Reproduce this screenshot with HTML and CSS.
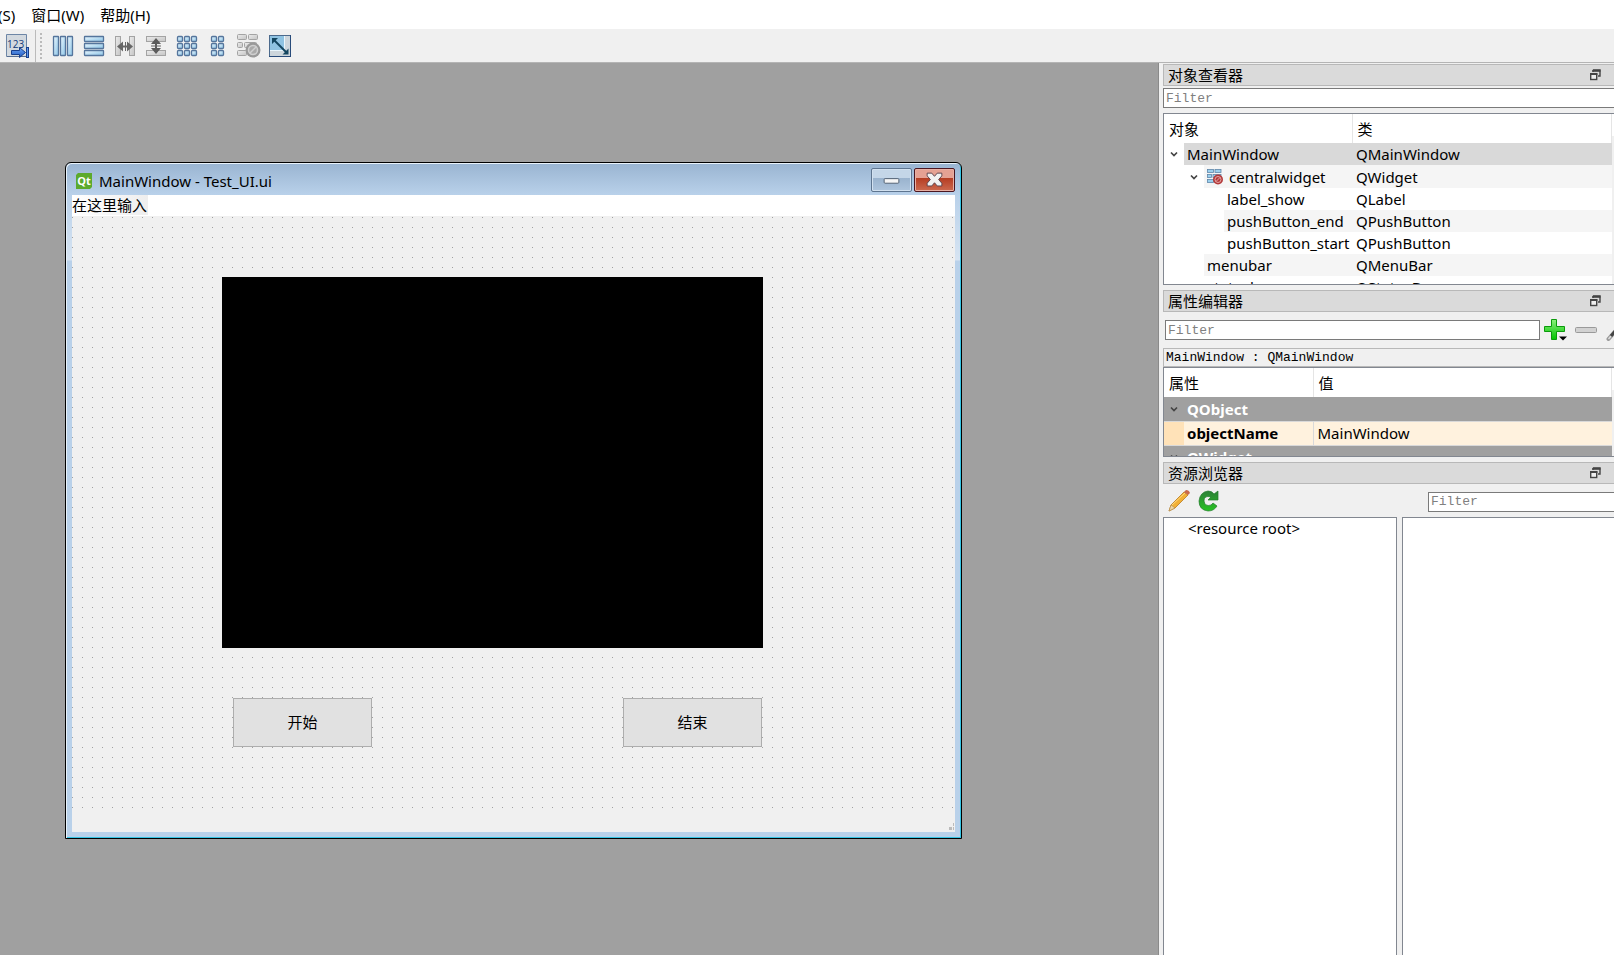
FILE: index.html
```
<!DOCTYPE html>
<html lang="zh-CN">
<head>
<meta charset="utf-8">
<title>Qt Designer</title>
<link rel="stylesheet" href="styles.css">
</head>
<body>
<svg class="defs" width="0" height="0" aria-hidden="true">
  <defs>
    <linearGradient id="blue" x1="0" y1="0" x2="1" y2="1"><stop offset="0" stop-color="#eaf7fe"/><stop offset="1" stop-color="#8cc4e6"/></linearGradient>
    <linearGradient id="grey" x1="0" y1="0" x2="1" y2="1"><stop offset="0" stop-color="#ececec"/><stop offset="1" stop-color="#c4c4c4"/></linearGradient>
    <linearGradient id="green" x1="0" y1="0" x2="0" y2="1"><stop offset="0" stop-color="#8cf07c"/><stop offset="1" stop-color="#00c400"/></linearGradient>
    <linearGradient id="leaf" x1="0" y1="0" x2="0" y2="1"><stop offset="0" stop-color="#2d8038"/><stop offset="1" stop-color="#27c322"/></linearGradient>
    <linearGradient id="arrow" x1="0" y1="0" x2="0" y2="1"><stop offset="0" stop-color="#6fa7f5"/><stop offset="1" stop-color="#1f58c0"/></linearGradient>
    <symbol id="float" viewBox="0 0 12 12"><path d="M4 1h7v6H9M4 1v2" fill="none" stroke="#444" stroke-width="1.4"/><path d="M3.500 1.800h8" stroke="#444" stroke-width="2"/><rect x="1.700" y="5" width="6" height="5.500" fill="#eee" stroke="#444" stroke-width="1.400"/><path d="M1 5h7.400" stroke="#444" stroke-width="2"/></symbol>
    <symbol id="chevron" viewBox="0 0 8 8"><path d="M1 2.500 4 5.500 7 2.500" fill="none" stroke="#444" stroke-width="1.700"/></symbol>
  </defs>
</svg>

<nav class="menubar" aria-label="菜单">
  <button class="menu">(S)</button>
  <button class="menu">窗口(W)</button>
  <button class="menu">帮助(H)</button>
</nav>

<div class="toolbar" role="toolbar">
  <button class="tool tab-order" aria-label="编辑 Tab 顺序"><svg viewBox="0 0 24 24"><path d="M.500 .500h20v22H.500z" fill="#d3d9df" stroke="#6d86a6"/><path d="M1 22.500h20" stroke="#586f92"/><text x="1" y="14" class="digits">123</text><path d="M5.500 16.500h8v-3l6 5-6 5v-3h-8z" fill="url(#arrow)" stroke="#173f8c"/><path d="M21.500 13v11" stroke="#173f8c" stroke-width="3"/><path d="M21.500 14v9" stroke="#5b96ef"/></svg></button>
  <span class="split"></span>
  <span class="grip"></span>
  <button class="tool" aria-label="水平布局"><svg viewBox="0 0 24 24"><g fill="url(#blue)" stroke="#55759c" stroke-width="1.300"><rect x="2.500" y="2.500" width="5" height="19" rx=".5"/><rect x="9.500" y="2.500" width="5" height="19" rx=".5"/><rect x="16.500" y="2.500" width="5" height="19" rx=".5"/></g></svg></button>
  <button class="tool" aria-label="垂直布局"><svg viewBox="0 0 24 24"><g fill="url(#blue)" stroke="#55759c" stroke-width="1.300"><rect x="2.500" y="2.500" width="19" height="5" rx=".5"/><rect x="2.500" y="9.500" width="19" height="5" rx=".5"/><rect x="2.500" y="16.500" width="19" height="5" rx=".5"/></g></svg></button>
  <button class="tool" aria-label="水平分裂器"><svg viewBox="0 0 24 24"><g fill="url(#grey)" stroke="#a3a3a3"><rect x="2.500" y="2.500" width="5" height="19"/><rect x="16.500" y="2.500" width="5" height="19"/></g><path d="M4 12.500l6-5v4h4v-4l6 5-6 5v-4h-4v4z" fill="#666"/><path d="M12.500 8v9" stroke="#666"/></svg></button>
  <button class="tool" aria-label="垂直分裂器"><svg viewBox="0 0 24 24"><g fill="url(#grey)" stroke="#a3a3a3"><rect x="2.500" y="2.500" width="19" height="5"/><rect x="2.500" y="16.500" width="19" height="5"/></g><path d="M12 4l5 6h-4v4h4l-5 6-5-6h4v-4H7z" fill="#5c5c5c"/><path d="M7 12h10" stroke="#666"/></svg></button>
  <button class="tool" aria-label="栅格布局"><svg viewBox="0 0 24 24"><g fill="url(#blue)" stroke="#55759c" stroke-width="1.300"><rect x="2.500" y="2.500" width="5" height="5" rx="1"/><rect x="9.500" y="2.500" width="5" height="5" rx="1"/><rect x="16.500" y="2.500" width="5" height="5" rx="1"/><rect x="2.500" y="9.500" width="5" height="5" rx="1"/><rect x="9.500" y="9.500" width="5" height="5" rx="1"/><rect x="16.500" y="9.500" width="5" height="5" rx="1"/><rect x="2.500" y="16.500" width="5" height="5" rx="1"/><rect x="9.500" y="16.500" width="5" height="5" rx="1"/><rect x="16.500" y="16.500" width="5" height="5" rx="1"/></g></svg></button>
  <button class="tool" aria-label="表单布局"><svg viewBox="0 0 24 24"><g fill="url(#blue)" stroke="#55759c" stroke-width="1.300"><rect x="5.500" y="2.500" width="5" height="5" rx="1"/><rect x="12.500" y="2.500" width="5" height="5" rx="1"/><rect x="5.500" y="9.500" width="5" height="5" rx="1"/><rect x="12.500" y="9.500" width="5" height="5" rx="1"/><rect x="5.500" y="16.500" width="5" height="5" rx="1"/><rect x="12.500" y="16.500" width="5" height="5" rx="1"/></g></svg></button>
  <button class="tool" aria-label="打破布局"><svg viewBox="0 0 24 24"><g fill="url(#grey)" stroke="#a3a3a3"><rect x=".5" y=".5" width="9" height="5" rx="1"/><rect x="11.500" y=".5" width="9" height="5" rx="1"/><rect x=".5" y="8.500" width="5" height="5" rx="1"/><rect x="7.500" y="8.500" width="12" height="5" rx="1"/><rect x=".5" y="16.500" width="9" height="5" rx="1"/></g><circle cx="16" cy="16" r="7.500" fill="#999"/><circle cx="16" cy="16" r="4.500" fill="#aaa" stroke="#d0d0d0" stroke-width="1.500"/><path d="M13 19l6-6" stroke="#d0d0d0" stroke-width="1.500"/></svg></button>
  <button class="tool" aria-label="调整大小"><svg viewBox="0 0 24 24"><rect x="1.500" y="1.500" width="21" height="21" fill="#cdd6dc" stroke="#4c6a8c"/><rect x="2" y="2" width="14" height="14" fill="#8fc3e2"/><path d="M16.500 2v14.500H2" fill="none" stroke="#eaf6fc"/><path d="M6 6l13 13" stroke="#144660" stroke-width="2"/><path d="M4 4h6l-6 6zM20.500 20.500h-6l6-6z" fill="#144660"/><path d="M1 22.500h22M22.500 1v22" stroke="#284b7a"/></svg></button>
</div>

<div class="body">
  <main class="workspace">
    <section class="window">
      <header class="titlebar">
        <svg class="logo" viewBox="0 0 16 16"><path d="M2 0h14v14l-2 2H0V2z" fill="#5caa2c"/><text x="8" y="12" text-anchor="middle" class="logo-text">Qt</text></svg>
        <h1 class="caption">MainWindow - Test_UI.ui</h1>
        <button class="sys minimize" aria-label="最小化"><svg viewBox="0 0 41 24"><rect x="12.500" y="10.500" width="16" height="5" rx="1" fill="#f6f6f6" stroke="#4c5a6b"/></svg></button>
        <button class="sys close" aria-label="关闭"><svg viewBox="0 0 41 24"><path d="M12.500 4.500h5l3 3.500 3-3.500h5v3L25 11.500l3.500 4v3h-5l-3-3.500-3 3.500h-5v-3l3.500-4-3.500-4z" fill="#f2f2f2" stroke="#54404a"/></svg></button>
      </header>
      <div class="client">
        <div class="form-menu"><button class="type-here">在这里输入</button></div>
        <div class="form">
          <div class="label-show"></div>
          <button class="push start">开始</button>
          <button class="push end">结束</button>
        </div>
        <div class="statusbar"><svg class="size-grip" viewBox="0 0 5 7"><path d="M4 0h1v3H4zM4 4h1v3H4zM0 4h3v3H0z" fill="#bbb"/></svg></div>
      </div>
    </section>
  </main>

  <aside class="docks">
    <section class="dock">
      <header class="dock-title"><h2>对象查看器</h2><button class="float" aria-label="浮动"><svg><use href="#float"/></svg></button></header>
      <input class="filter" type="text" placeholder="Filter" aria-label="对象过滤">
      <div class="view objects">
        <table>
          <colgroup><col class="c-object"><col></colgroup>
          <thead><tr><th>对象</th><th>类</th></tr></thead>
          <tbody>
            <tr class="selected"><td><div class="node"><svg class="twist"><use href="#chevron"/></svg><span class="name">MainWindow</span></div></td><td>QMainWindow</td></tr>
            <tr class="alt tall"><td><div class="node level-1"><svg class="twist"><use href="#chevron"/></svg><span class="name"><svg class="broken" viewBox="0 0 16 16"><g fill="#9bd0ee" stroke="#5f86a8" stroke-width=".8"><rect x=".5" y=".5" width="6" height="3"/><rect x="8" y=".5" width="6" height="3"/><rect x=".5" y="5.500" width="4" height="3"/><rect x="6" y="5.500" width="8" height="3"/><rect x=".5" y="10.500" width="6" height="3"/></g><circle cx="11" cy="10.500" r="5" fill="#b33a3a"/><circle cx="11" cy="10.500" r="3" fill="none" stroke="#e6a5a5"/><path d="M9 12.500l4-4" stroke="#e6a5a5"/></svg>centralwidget</span></div></td><td>QWidget</td></tr>
            <tr><td><div class="node level-2"><span class="twist"></span><span class="name">label_show</span></div></td><td>QLabel</td></tr>
            <tr class="alt"><td><div class="node level-2"><span class="twist"></span><span class="name">pushButton_end</span></div></td><td>QPushButton</td></tr>
            <tr><td><div class="node level-2"><span class="twist"></span><span class="name">pushButton_start</span></div></td><td>QPushButton</td></tr>
            <tr class="alt"><td><div class="node level-1"><span class="twist"></span><span class="name">menubar</span></div></td><td>QMenuBar</td></tr>
            <tr><td><div class="node level-1"><span class="twist"></span><span class="name">statusbar</span></div></td><td>QStatusBar</td></tr>
          </tbody>
        </table>
        <span class="scroll"></span>
      </div>
    </section>

    <section class="dock">
      <header class="dock-title"><h2>属性编辑器</h2><button class="float" aria-label="浮动"><svg><use href="#float"/></svg></button></header>
      <div class="property-tools">
        <input class="filter" type="text" placeholder="Filter" aria-label="属性过滤">
        <button class="small" aria-label="添加"><svg viewBox="0 0 24 24"><path d="M8.500 1.500h5v7h8v5h-8v8h-5v-8h-7v-5h7z" fill="url(#green)" stroke="#0b9a0b"/><path d="M16 18.500h8l-4 4z" fill="#000"/></svg></button>
        <button class="small" aria-label="移除"><svg viewBox="0 0 24 24"><rect x="1.500" y="9.500" width="21" height="5" rx="1" fill="#d2d2d2" stroke="#9a9a9a"/></svg></button>
        <button class="small" aria-label="配置"><svg viewBox="0 0 24 24"><path d="M3.500 21 10 13.500" stroke="#999" stroke-width="4" stroke-linecap="round"/><path d="M3.500 21l3-3.500" stroke="#ddd" stroke-width="1.500"/><path d="M6 18 20 2" stroke="#444" stroke-width="3"/></svg></button>
      </div>
      <p class="object-name">MainWindow : QMainWindow</p>
      <div class="view properties">
        <table>
          <colgroup><col class="c-property"><col></colgroup>
          <thead><tr><th>属性</th><th>值</th></tr></thead>
          <tbody>
            <tr class="group"><td colspan="2"><div class="node"><svg class="twist"><use href="#chevron"/></svg><span class="name">QObject</span></div></td></tr>
            <tr class="property"><td><div class="node"><span class="twist"></span><span class="name">objectName</span></div></td><td>MainWindow</td></tr>
            <tr class="group"><td colspan="2"><div class="node"><svg class="twist"><use href="#chevron"/></svg><span class="name">QWidget</span></div></td></tr>
          </tbody>
        </table>
        <span class="scroll"></span>
      </div>
    </section>

    <section class="dock resources">
      <header class="dock-title"><h2>资源浏览器</h2><button class="float" aria-label="浮动"><svg><use href="#float"/></svg></button></header>
      <div class="resource-tools">
        <button class="small" aria-label="编辑资源"><svg viewBox="0 0 24 24"><path d="M2 22l2-6L17 3l4 3L8 19z" fill="#f2b035" stroke="#b9791d" stroke-width=".8"/><path d="M2 22l2-6 4 3z" fill="#ecd5a8" stroke="#b08b4c" stroke-width=".6"/><path d="M17 3l2-2q3 0 4 3l-2 2z" fill="#c9694c"/><path d="M5 16 18 4" stroke="#ffdc80"/></svg></button>
        <button class="small" aria-label="重新加载"><svg viewBox="0 0 24 24"><path d="M20 17q-3 5-9 5-9-1-9-10 1-9 9-10 4 0 6 3l4-3v9H11l3-3q-7-2-7 4 1 6 7 4l2-2z" fill="url(#leaf)" stroke="#237b2c" stroke-width=".7"/></svg></button>
        <input class="filter" type="text" placeholder="Filter" aria-label="资源过滤">
      </div>
      <div class="panes">
        <div class="pane tree">&lt;resource root&gt;</div>
        <div class="pane files"></div>
      </div>
    </section>
  </aside>
</div>
</body>
</html>
```
FILE: styles.css
```
* { box-sizing: border-box; }

html, body { height: 100%; }

body {
  margin: 0;
  display: flex;
  flex-direction: column;
  overflow: hidden;
  background: #f0f0f0;
  color: #000;
  font: 15px/20px "Noto Sans", "Noto Sans CJK SC", sans-serif;
}

button {
  border: 0;
  padding: 0;
  background: none;
  color: inherit;
  font: inherit;
}

svg { display: block; }
h1, h2, p { margin: 0; font: inherit; }
.defs { position: absolute; }

/* Menu bar and tool bar */
.menubar {
  display: flex;
  flex: none;
  gap: 16px;
  height: 29px;
  margin-left: -2px;
  background: #fff;
}

.menu { white-space: nowrap; }

.toolbar {
  display: flex;
  flex: none;
  align-items: center;
  gap: 7px;
  height: 34px;
  padding-left: 6px;
  border-bottom: 1px solid #b4b4b4;
}

.tool, .tool svg { width: 24px; height: 24px; }
.digits { font: 10px "Open Sans", sans-serif; fill: #123a78; }
.split { width: 1px; height: 32px; margin-left: -2px; background: #bbb; }
.grip { width: 2px; height: 26px; margin-right: 2px; margin-left: -3px; background: repeating-linear-gradient(#bbb 0 2px, transparent 2px 4px); }

.body { display: flex; flex: 1; min-height: 0; }

.workspace {
  position: relative;
  flex: 1;
  min-width: 0;
  border-right: 1px solid #8a8a8a;
  background: #a0a0a0;
}

/* Form window */
.window {
  position: absolute;
  top: 99px;
  left: 65px;
  width: 897px;
  padding: 0 6px 6px;
  border: 1px solid #000;
  border-radius: 6px 6px 0 0;
  background: linear-gradient(#99b4d1, #b9d1ea 32px, #d7e4f2 97px, #b9d1ea 98px);
  box-shadow: inset 1px 1px #e8f2fa, inset -1px -1px #35c5e5;
}

.titlebar { display: flex; align-items: flex-start; height: 32px; }
.logo { width: 16px; height: 16px; margin: 10px 7px 0 4px; }
.logo-text { font: bold 11px "Open Sans", sans-serif; fill: #fff; }
.caption { flex: 1; padding-top: 8px; }

.sys {
  width: 41px;
  height: 24px;
  margin-top: 5px;
  border: 1px solid #5e7590;
  border-radius: 2px;
  background: linear-gradient(#c4d6e8 0 42%, #9ab3ce 42%, #aec5dd);
  box-shadow: inset 0 0 0 1px #d2e1f0;
}

.sys svg { width: 39px; height: 22px; }
.close { margin-left: 2px; border-color: #4b1620; background: linear-gradient(#e5a193 0 42%, #b53d23 42%, #cc6a50); box-shadow: inset 0 0 0 1px #e8b0a4; }

.client { background: #f0f0f0; }
.form-menu { height: 21px; background: #fff; }
.type-here { display: block; padding-right: 1px; background: linear-gradient(90deg, #fff, #eee); }

.form {
  position: relative;
  height: 595px;
  background: conic-gradient(from 270deg at 1px 1px, #a0a0a0 90deg, transparent 0) 0 1px / 10px 10px;
}

.label-show { position: absolute; top: 61px; left: 150px; width: 541px; height: 371px; background: #000; }

.push {
  position: absolute;
  top: 482px;
  width: 139px;
  height: 49px;
  padding-bottom: 2px;
  border: 1px solid #adadad;
  background: #e1e1e1;
}

.start { left: 161px; }
.end { left: 551px; }

.statusbar { display: flex; align-items: flex-end; justify-content: flex-end; height: 21px; padding: 0 1px 2px 0; }
.size-grip { width: 5px; height: 7px; }

/* Dock panels */
.docks {
  display: flex;
  flex: 0 0 455px;
  flex-direction: column;
  gap: 5px;
  min-width: 0;
  padding: 1px 0 0 4px;
  overflow: hidden;
}

.dock { display: flex; flex-direction: column; }

.dock-title {
  display: flex;
  flex: none;
  align-items: center;
  justify-content: space-between;
  height: 22px;
  padding: 0 13px 0 4px;
  border: 1px solid #b8b8b8;
  border-right: 0;
  background: #dadada;
}

.float svg { width: 12px; height: 12px; }

.filter {
  flex: none;
  width: 100%;
  height: 20px;
  padding: 0 2px;
  border: 1px solid #7a7a7a;
  border-radius: 0;
  background: #fff;
  font: 13px "Liberation Mono", monospace;
}

.filter::placeholder { color: #808080; }
.dock > .filter { margin-top: 2px; border-right: 0; }

.view {
  display: flex;
  align-items: flex-start;
  overflow: hidden;
  border: 1px solid #828790;
  border-right: 0;
  background: #fff;
}

.objects { height: 172px; margin-top: 5px; }
.properties { height: 90px; }
.scroll { flex: 0 0 2px; align-self: stretch; margin-top: 22px; background: #f0f0f0; }

table { flex: 1; border-collapse: collapse; table-layout: fixed; }
.c-object { width: 188px; }
.c-property { width: 149px; }
th, td { padding: 0; line-height: 20px; white-space: nowrap; }
th { height: 30px; padding-left: 5px; border-right: 1px solid #e5e5e5; font-weight: normal; text-align: left; }
td { height: 22px; }
td + td { padding-left: 4px; }

.node { display: flex; align-items: center; height: 22px; }
.level-1 { padding-left: 20px; }
.level-2 { padding-left: 40px; }
.twist { flex: none; width: 8px; height: 8px; margin: 0 6px; }
.name { display: flex; flex: 1; align-items: center; gap: 6px; height: 22px; padding-left: 3px; }
.broken { width: 16px; height: 16px; }
.tall td { height: 23px; }
.tall .node, .tall .name { height: 23px; }
.objects th, .properties th { height: 29px; }
.alt .name, .alt td + td { background: #f5f5f5; }
.selected .name, .selected td + td { background: #d9d9d9; }

.property-tools { display: flex; align-items: center; gap: 7px; padding: 6px 0 6px 2px; }
.property-tools .filter { width: 375px; margin-right: -4px; }
.small { flex: none; }
.small, .small svg { width: 24px; height: 24px; }

.object-name {
  height: 19px;
  padding-left: 2px;
  border: 1px solid #b8b8b8;
  border-right: 0;
  font: 13px/17px "Liberation Mono", monospace;
}

.group td, .property td { height: 24px; border-bottom: 1px solid #d9d9d9; }
.group td { background: #a0a0a0; color: #fff; font-weight: bold; }
.property td { background: #fff2de; }
.property td + td { border-left: 1px solid #d9d9d9; }
.property .node { height: 23px; background: linear-gradient(90deg, #ffe2b8 20px, transparent 20px); }
.property .name { font-weight: bold; }

.resources { flex: 1; min-height: 0; }
.resource-tools { display: flex; align-items: center; gap: 6px; height: 33px; padding-left: 4px; }
.resource-tools .filter { flex: 1; margin-top: 2px; margin-left: 201px; border-right: 0; }
.panes { display: flex; flex: 1; gap: 5px; min-height: 0; }
.pane { border: 1px solid #828790; border-bottom: 0; background: #fff; }
.tree { flex: 0 0 234px; padding-left: 24px; }
.files { flex: 1; border-right: 0; }
```
